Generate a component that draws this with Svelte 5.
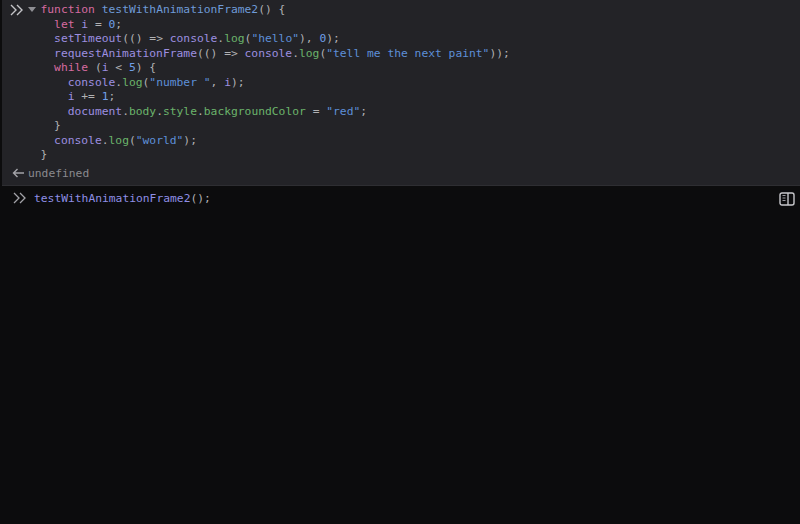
<script>
  const lines = [
    [["k", "function"], ["p", " "], ["f", "testWithAnimationFrame2"], ["p", "() {"]],
    [["k", "  let"], ["v", " i"], ["p", " = "], ["n", "0"], ["p", ";"]],
    [["v", "  setTimeout"], ["p", "(() => "], ["v", "console"], ["p", "."], ["m", "log"], ["p", "("], ["s", '"hello"'], ["p", "), "], ["n", "0"], ["p", ");"]],
    [["v", "  requestAnimationFrame"], ["p", "(() => "], ["v", "console"], ["p", "."], ["m", "log"], ["p", "("], ["s", '"tell me the next paint"'], ["p", "));"]],
    [["k", "  while"], ["p", " ("], ["v", "i"], ["p", " < "], ["n", "5"], ["p", ") {"]],
    [["v", "    console"], ["p", "."], ["m", "log"], ["p", "("], ["s", '"number "'], ["p", ", "], ["v", "i"], ["p", ");"]],
    [["v", "    i"], ["p", " += "], ["n", "1"], ["p", ";"]],
    [["v", "    document"], ["p", "."], ["m", "body"], ["p", "."], ["m", "style"], ["p", "."], ["m", "backgroundColor"], ["p", " = "], ["s", '"red"'], ["p", ";"]],
    [["p", "  }"]],
    [["v", "  console"], ["p", "."], ["m", "log"], ["p", "("], ["s", '"world"'], ["p", ");"]],
    [["p", "}"]]
  ];
</script>

<div class="console">
  <div class="output">
    <div class="entry">
      <svg class="chevrons" width="14" height="12" viewBox="0 0 14 12" fill="none" stroke="#c4c4c8" stroke-width="1.4">
        <path d="M1 1l5 5-5 5M7 1l5 5-5 5" />
      </svg>
      <span class="caret"></span>
      <pre class="code">{#each lines as line}<div class="line">{#each line as [kind, text]}<span class={kind}>{text}</span>{/each}</div>{/each}</pre>
    </div>
    <div class="result">
      <svg width="13" height="10" viewBox="0 0 13 10" fill="none" stroke="#a3a3a8" stroke-width="1.4">
        <path d="M12 5H2M5.5 1L1.5 5l4 4" />
      </svg>
      <span>undefined</span>
    </div>
  </div>
  <div class="input">
    <svg class="chevrons" width="14" height="12" viewBox="0 0 14 12" fill="none" stroke="#a3a3a8" stroke-width="1.3">
      <path d="M1 1l5 5-5 5M7 1l5 5-5 5" />
    </svg>
    <div class="prompt"><span class="fi">testWithAnimationFrame2</span><span class="p">();</span></div>
    <button class="toggle" type="button" aria-label="Toggle editor">
      <svg width="16" height="14" viewBox="0 0 16 14" fill="none">
        <rect x="1" y="1" width="14" height="12" rx="2" stroke="#c8c8cc" stroke-width="1.4" />
        <path d="M9 1v12" stroke="#c8c8cc" stroke-width="1.4" />
        <path d="M3.5 3.5h3M3.5 6h3M3.5 8.5h3" stroke="#9a9aa0" stroke-width="1" />
      </svg>
    </button>
  </div>
</div>

<style>
  :global(body) {
    margin: 0;
    background: #0c0c0d;
  }

  .console {
    width: 800px;
    height: 524px;
    display: flex;
    flex-direction: column;
    font-family: "DejaVu Sans Mono", monospace;
    font-size: 11.3px;
    border-left: 2px solid #0c0c0d;
    box-sizing: border-box;
    overflow: hidden;
  }

  .output {
    background: #232327;
    height: 186px;
    flex: none;
    border-bottom: 1px solid #2e2e32;
    box-sizing: border-box;
  }

  .entry {
    display: flex;
    align-items: flex-start;
    padding-top: 3.4px;
    height: 161px;
    box-sizing: border-box;
    position: relative;
  }

  .entry .chevrons {
    margin: 1px 0 0 8px;
    flex: none;
  }

  .caret {
    width: 0;
    height: 0;
    flex: none;
    margin: 4px 0 0 4px;
    border-left: 4px solid transparent;
    border-right: 4px solid transparent;
    border-top: 5px solid #8f8f94;
  }

  .code {
    margin: 0 0 0 4.5px;
    font: inherit;
    line-height: 14.5px;
    color: #b1b1b3;
  }

  .line {
    height: 14.5px;
    white-space: pre;
  }

  .result {
    display: flex;
    align-items: center;
    gap: 3px;
    height: 24px;
    padding-left: 10px;
    color: #8a8a8e;
  }

  .input {
    flex: 1;
    display: flex;
    align-items: flex-start;
    padding-top: 6px;
    background: #0c0c0d;
    position: relative;
  }

  .input .chevrons {
    margin: 0 0 0 11px;
    flex: none;
  }

  .prompt {
    margin-left: 7px;
    line-height: 14.5px;
    flex: 1;
    white-space: pre;
  }

  .toggle {
    background: none;
    border: 0;
    padding: 0;
    margin: 0 5px 0 0;
    line-height: 0;
  }

  .k { color: #d66ba0; }
  .f { color: #6f9bd8; }
  .fi { color: #8f8fe6; }
  .v { color: #9d8fe0; }
  .m { color: #6bb36b; }
  .s { color: #5e8fd8; }
  .n { color: #6f9fe8; }
  .p { color: #b1b1b3; }
</style>
